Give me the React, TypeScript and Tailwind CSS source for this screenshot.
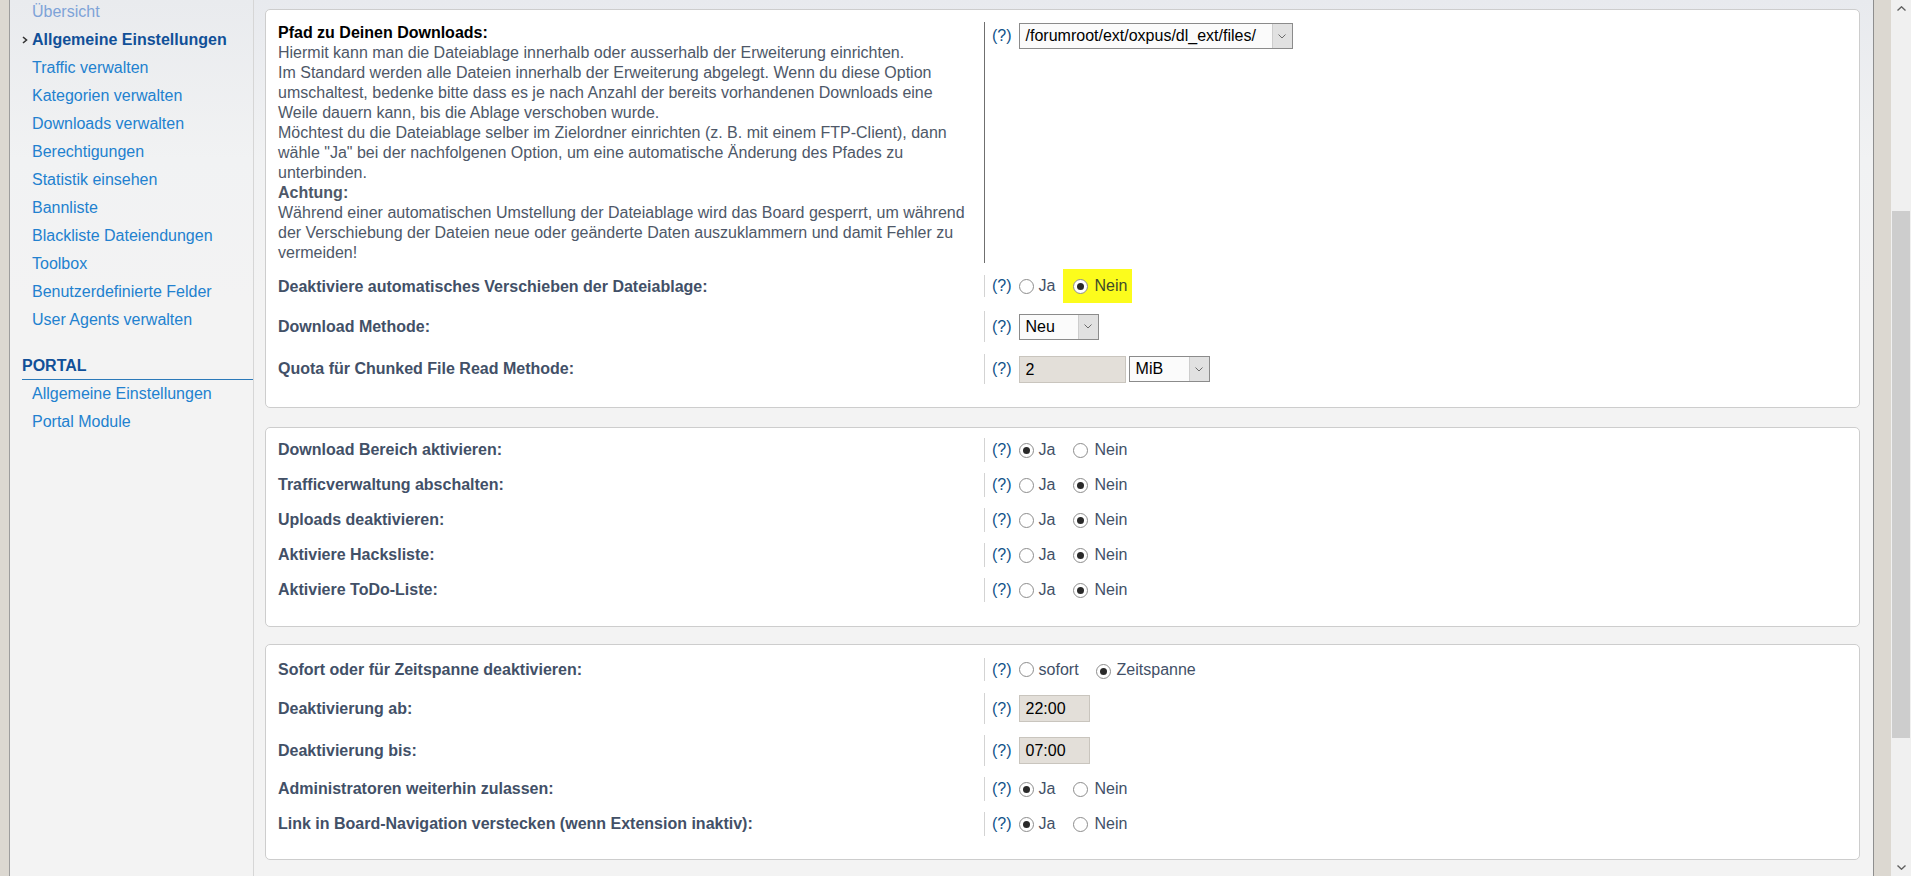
import React from "react";

const menu = [
  "Übersicht",
  "Allgemeine Einstellungen",
  "Traffic verwalten",
  "Kategorien verwalten",
  "Downloads verwalten",
  "Berechtigungen",
  "Statistik einsehen",
  "Bannliste",
  "Blackliste Dateiendungen",
  "Toolbox",
  "Benutzerdefinierte Felder",
  "User Agents verwalten",
];

const explain = [
  "Hiermit kann man die Dateiablage innerhalb oder ausserhalb der Erweiterung einrichten.",
  "Im Standard werden alle Dateien innerhalb der Erweiterung abgelegt. Wenn du diese Option",
  "umschaltest, bedenke bitte dass es je nach Anzahl der bereits vorhandenen Downloads eine",
  "Weile dauern kann, bis die Ablage verschoben wurde.",
  "Möchtest du die Dateiablage selber im Zielordner einrichten (z. B. mit einem FTP-Client), dann",
  'wähle "Ja" bei der nachfolgenen Option, um eine automatische Änderung des Pfades zu',
  "unterbinden.",
];

const warning = [
  "Während einer automatischen Umstellung der Dateiablage wird das Board gesperrt, um während",
  "der Verschiebung der Dateien neue oder geänderte Daten auszuklammern und damit Fehler zu",
  "vermeiden!",
];

function Help() {
  return <span className="text-[#105289] mr-[7px]">(?)</span>;
}

function Radio({ checked }: { checked?: boolean }) {
  return (
    <span className="inline-flex w-[15px] h-[15px] shrink-0 rounded-full border border-[#8d8d8d] bg-white items-center justify-center">
      {checked && <span className="w-[7px] h-[7px] rounded-full bg-[#2a2a2a]" />}
    </span>
  );
}

function Choice({
  a,
  b,
  first,
  mark,
}: {
  a: string;
  b: string;
  first: boolean;
  mark?: boolean;
}) {
  return (
    <div className="flex items-center text-[#425067]">
      <Radio checked={first} />
      <span className="ml-[5px]">{a}</span>
      {mark ? (
        <span className="ml-[8px] -my-[5px] py-[5px] pl-[10px] pr-[5px] bg-[#fcfc1c] flex items-center">
          <Radio checked={!first} />
          <span className="ml-[6px] text-[#3f4a2a]">{b}</span>
        </span>
      ) : (
        <span className="ml-[18px] flex items-center">
          <Radio checked={!first} />
          <span className="ml-[6px]">{b}</span>
        </span>
      )}
    </div>
  );
}

function Select({ value, w }: { value: string; w: string }) {
  return (
    <div className={`${w} h-[26px] border border-[#8b8b8b] bg-[#fbfbfb] flex`}>
      <span className="flex-1 pl-[6px] leading-[24px] text-black whitespace-nowrap overflow-hidden">
        {value}
      </span>
      <span className="w-[20px] bg-[#e1e1e1] border-l border-[#cdcdcd] flex items-center justify-center">
        <svg width="8" height="5" viewBox="0 0 8 5">
          <path d="M0.5 0.5 L4 4 L7.5 0.5" stroke="#6b6b6b" fill="none" />
        </svg>
      </span>
    </div>
  );
}

function Field({ value, w }: { value: string; w: string }) {
  return (
    <div className={`${w} h-[27px] border border-[#c9c5be] bg-[#e3dfd9] pl-[6px] leading-[25px] text-black`}>
      {value}
    </div>
  );
}

function Row({
  label,
  h,
  children,
}: {
  label: string;
  h: string;
  children: React.ReactNode;
}) {
  return (
    <div className="flex">
      <div className="w-[706px] shrink-0 flex items-center font-bold text-[#425067]">{label}</div>
      <div className={`${h} border-l border-[#d3d3d3] pl-[7px] flex items-center`}>
        <Help />
        {children}
      </div>
    </div>
  );
}

function Panel({ className, children }: { className: string; children: React.ReactNode }) {
  return (
    <div className={`bg-white border border-[#cdcdcd] rounded-[5px] px-[12px] flex flex-col ${className}`}>
      {children}
    </div>
  );
}

export default function App() {
  return (
    <div className="flex w-[1911px] h-[876px] overflow-hidden text-[16px] font-['Liberation_Sans',Arial,sans-serif]">
      <div className="w-[9px] bg-[#dcd8d1]" />
      <div className="w-[1px] bg-[#9d9d9d]" />

      {/* Menü links */}
      <div className="w-[244px] border-r border-[#d6d6d6] bg-[linear-gradient(180deg,#e9ebee_0px,#f1f2f3_160px,#f3f3f3_300px)] pl-[12px]">
        <ul className="-mt-[2px]">
          {menu.map((m, i) => (
            <li key={m} className="h-[28px] flex items-center">
              {i === 1 ? (
                <>
                  <svg width="10" height="8" viewBox="0 0 10 8">
                    <path d="M1 1 L4.5 4 L1 7" stroke="#333" strokeWidth="1.6" fill="none" />
                  </svg>
                  <span className="font-bold text-[#115098]">{m}</span>
                </>
              ) : (
                <span className={`ml-[10px] ${i === 0 ? "text-[#7ea3d8]" : "text-[#2281cf]"}`}>{m}</span>
              )}
            </li>
          ))}
        </ul>
        <div className="mt-[22px] h-[24px] pb-[3px] border-b border-[#2b79b9] font-bold text-[#115098] leading-[20px]">
          PORTAL
        </div>
        <ul>
          <li className="h-[28px] flex items-center ml-[10px] text-[#2281cf]">Allgemeine Einstellungen</li>
          <li className="h-[28px] flex items-center ml-[10px] text-[#2281cf]">Portal Module</li>
        </ul>
      </div>

      {/* Inhalt */}
      <div className="flex-1 bg-[linear-gradient(180deg,#e8eaee_0px,#f1f2f3_160px,#f3f3f3_300px)] pt-[9px] pl-[11px] pr-[13px]">
        <Panel className="pt-[12px] pb-[23px] gap-[12px]">
          <div className="flex">
            <div className="w-[706px] shrink-0 pt-[1px] leading-[20px] text-[#4e5868]">
              <div className="font-bold text-black">Pfad zu Deinen Downloads:</div>
              {explain.map((l) => (
                <div key={l} className="whitespace-nowrap">{l}</div>
              ))}
              <div className="font-bold text-[#4e5868]">Achtung:</div>
              {warning.map((l) => (
                <div key={l} className="whitespace-nowrap">{l}</div>
              ))}
            </div>
            <div className="border-l border-[#6f6f6f] pl-[7px] pt-[1px] flex items-start">
              <span className="text-[#105289] mr-[7px] leading-[26px]">(?)</span>
              <Select value="/forumroot/ext/oxpus/dl_ext/files/" w="w-[274px]" />
            </div>
          </div>
          <Row label="Deaktiviere automatisches Verschieben der Dateiablage:" h="h-[22px]">
            <Choice a="Ja" b="Nein" first={false} mark />
          </Row>
          <Row label="Download Methode:" h="h-[31px]">
            <Select value="Neu" w="w-[80px]" />
          </Row>
          <Row label="Quota für Chunked File Read Methode:" h="h-[30px]">
            <Field value="2" w="w-[107px]" />
            <div className="ml-[3px]">
              <Select value="MiB" w="w-[81px]" />
            </div>
          </Row>
        </Panel>

        <Panel className="mt-[19px] pt-[10px] pb-[24px] gap-[11px]">
          <Row label="Download Bereich aktivieren:" h="h-[24px]">
            <Choice a="Ja" b="Nein" first />
          </Row>
          <Row label="Trafficverwaltung abschalten:" h="h-[24px]">
            <Choice a="Ja" b="Nein" first={false} />
          </Row>
          <Row label="Uploads deaktivieren:" h="h-[24px]">
            <Choice a="Ja" b="Nein" first={false} />
          </Row>
          <Row label="Aktiviere Hacksliste:" h="h-[24px]">
            <Choice a="Ja" b="Nein" first={false} />
          </Row>
          <Row label="Aktiviere ToDo-Liste:" h="h-[24px]">
            <Choice a="Ja" b="Nein" first={false} />
          </Row>
        </Panel>

        <Panel className="mt-[17px] pt-[13px] pb-[23px] gap-[11px]">
          <Row label="Sofort oder für Zeitspanne deaktivieren:" h="h-[23px]">
            <div className="flex items-center text-[#425067]">
              <Radio />
              <span className="ml-[5px]">sofort</span>
              <span className="ml-[17px]">
                <Radio checked />
              </span>
              <span className="ml-[6px]">Zeitspanne</span>
            </div>
          </Row>
          <Row label="Deaktivierung ab:" h="h-[31px]">
            <Field value="22:00" w="w-[71px]" />
          </Row>
          <Row label="Deaktivierung bis:" h="h-[31px]">
            <Field value="07:00" w="w-[71px]" />
          </Row>
          <Row label="Administratoren weiterhin zulassen:" h="h-[24px]">
            <Choice a="Ja" b="Nein" first />
          </Row>
          <Row label="Link in Board-Navigation verstecken (wenn Extension inaktiv):" h="h-[24px]">
            <Choice a="Ja" b="Nein" first />
          </Row>
        </Panel>
      </div>

      <div className="w-[1px] bg-[#8e8e8e]" />
      <div className="w-[17px] bg-[#dcd8d1]" />

      {/* Scrollbar */}
      <div className="w-[20px] bg-[#f0f0f0] flex flex-col items-center">
        <div className="h-[17px] flex items-center justify-center">
          <svg width="9" height="5" viewBox="0 0 9 5">
            <path d="M0.5 4.5 L4.5 0.8 L8.5 4.5" stroke="#606060" strokeWidth="1.4" fill="none" />
          </svg>
        </div>
        <div className="mt-[194px] w-[18px] h-[527px] bg-[#cdcdcd]" />
        <div className="flex-1" />
        <div className="h-[17px] flex items-center justify-center">
          <svg width="9" height="5" viewBox="0 0 9 5">
            <path d="M0.5 0.5 L4.5 4.2 L8.5 0.5" stroke="#606060" strokeWidth="1.4" fill="none" />
          </svg>
        </div>
      </div>
    </div>
  );
}
